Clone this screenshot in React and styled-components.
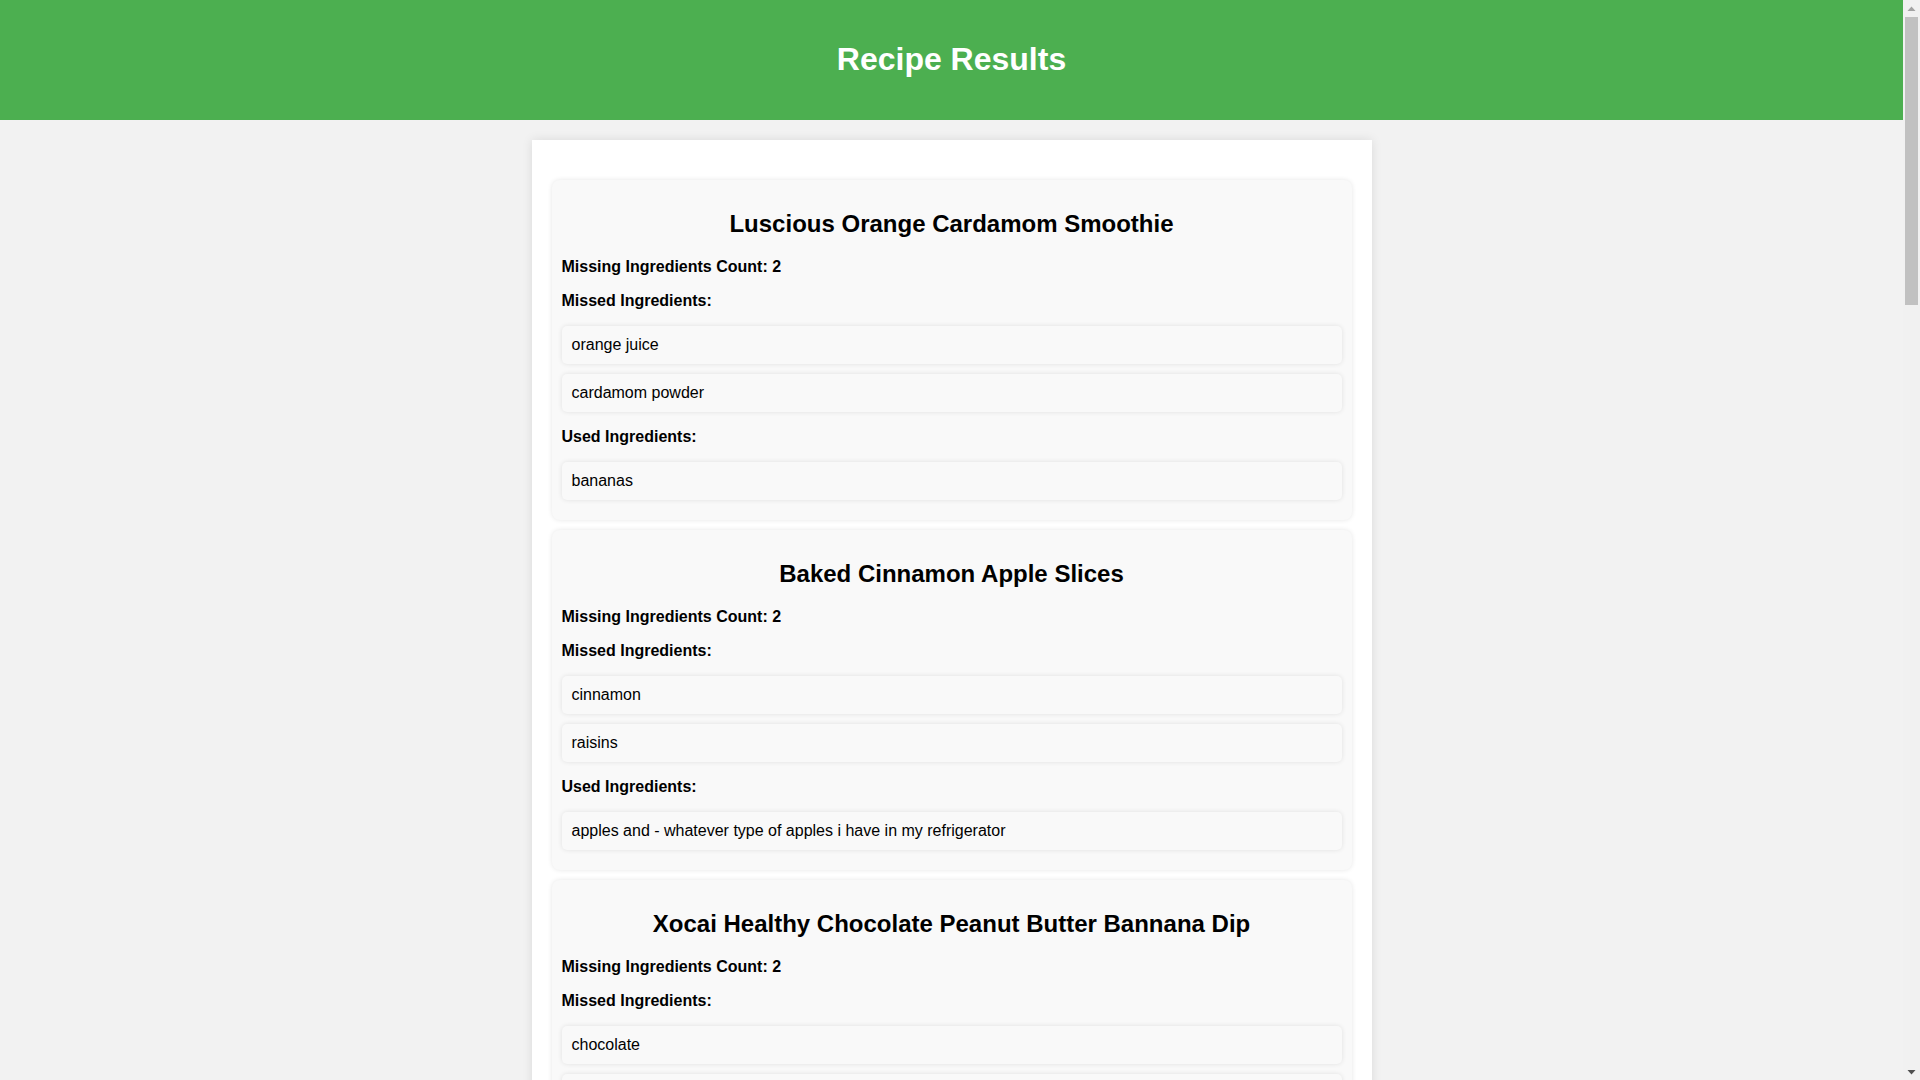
import React from "react";
import styled, { createGlobalStyle } from "styled-components";

const recipes = [
  {
    title: "Luscious Orange Cardamom Smoothie",
    missedCount: 2,
    missed: ["orange juice", "cardamom powder"],
    used: ["bananas"],
  },
  {
    title: "Baked Cinnamon Apple Slices",
    missedCount: 2,
    missed: ["cinnamon", "raisins"],
    used: ["apples and - whatever type of apples i have in my refrigerator"],
  },
  {
    title: "Xocai Healthy Chocolate Peanut Butter Bannana Dip",
    missedCount: 2,
    missed: ["chocolate", "peanut butter"],
    used: ["bananas"],
  },
  {
    title: "Banana Oatmeal Cookies",
    missedCount: 3,
    missed: ["rolled oats", "honey", "vanilla extract"],
    used: ["bananas"],
  },
  {
    title: "Cinnamon Sugar Fried Apples",
    missedCount: 3,
    missed: ["butter", "brown sugar", "cinnamon"],
    used: ["apples"],
  },
  {
    title: "Frozen Banana Bites",
    missedCount: 2,
    missed: ["dark chocolate", "coconut oil"],
    used: ["bananas"],
  },
  {
    title: "Apple Or Peach Strudel",
    missedCount: 3,
    missed: ["puff pastry", "sugar", "egg"],
    used: ["apples"],
  },
  {
    title: "Banana Bread Smoothie",
    missedCount: 2,
    missed: ["almond milk", "nutmeg"],
    used: ["bananas"],
  },
  {
    title: "Easy Homemade Applesauce",
    missedCount: 3,
    missed: ["lemon juice", "cinnamon", "water"],
    used: ["apples"],
  },
  {
    title: "Peanut Butter Banana Toast",
    missedCount: 2,
    missed: ["bread", "peanut butter"],
    used: ["bananas"],
  },
];

const GlobalStyle = createGlobalStyle`
  body {
    margin: 0 17px 0 0;
    padding: 0;
    font-family: "Liberation Sans", Arial, sans-serif;
    background-color: #f2f2f2;
    color: #000;
  }
`;

const App = () => {
  return (
    <>
      <GlobalStyle />
      <Header>
        <Title>Recipe Results</Title>
      </Header>
      <Container>
        {recipes.map((recipe) => (
          <RecipeCard key={recipe.title}>
            <RecipeTitle>{recipe.title}</RecipeTitle>
            <Label>Missing Ingredients Count: {recipe.missedCount}</Label>
            <Label>Missed Ingredients:</Label>
            <IngredientList>
              {recipe.missed.map((item) => (
                <Ingredient key={item}>{item}</Ingredient>
              ))}
            </IngredientList>
            <Label>Used Ingredients:</Label>
            <IngredientList>
              {recipe.used.map((item) => (
                <Ingredient key={item}>{item}</Ingredient>
              ))}
            </IngredientList>
          </RecipeCard>
        ))}
      </Container>
      <ScrollTrack>
        <ScrollButton>
          <svg width="9" height="6" viewBox="0 0 9 6">
            <polygon points="4.5,0.5 8.5,5 0.5,5" fill="#a3a3a3" />
          </svg>
        </ScrollButton>
        <ScrollThumb />
        <ScrollButton $bottom>
          <svg width="9" height="6" viewBox="0 0 9 6">
            <polygon points="0.5,1 8.5,1 4.5,5.5" fill="#505050" />
          </svg>
        </ScrollButton>
      </ScrollTrack>
    </>
  );
};

const Header = styled.header`
  background-color: #4caf50;
  color: white;
  text-align: center;
  padding: 20px;
`;
const Title = styled.h1`
  font-size: 32px;
  font-weight: bold;
  margin: 0.67em 0;
`;
const Container = styled.div`
  max-width: 800px;
  margin: 20px auto;
  padding: 40px 20px 20px;
  background: white;
  box-shadow: 0 0 10px rgba(0, 0, 0, 0.1);
`;
const RecipeCard = styled.div`
  background: #f9f9f9;
  border-radius: 8px;
  padding: 10px;
  margin-bottom: 10px;
  box-shadow: 0 0 5px rgba(0, 0, 0, 0.1);
`;
const RecipeTitle = styled.h2`
  font-size: 24px;
  font-weight: bold;
  text-align: center;
  margin: 20px 0;
`;
const Label = styled.p`
  font-size: 16px;
  font-weight: bold;
  margin: 16px 0;
`;
const IngredientList = styled.ul`
  list-style: none;
  padding: 0;
  margin: 16px 0 0;
`;
const Ingredient = styled.li`
  font-size: 16px;
  background: #f9f9f9;
  padding: 10px;
  margin-bottom: 10px;
  border-radius: 5px;
  box-shadow: 0 0 5px rgba(0, 0, 0, 0.1);
`;
const ScrollTrack = styled.div`
  position: fixed;
  top: 0;
  right: 0;
  width: 17px;
  height: 100vh;
  background: #f1f1f1;
  display: flex;
  flex-direction: column;
`;
const ScrollButton = styled.div`
  height: 17px;
  display: flex;
  align-items: center;
  justify-content: center;
  margin-top: ${(p) => (p.$bottom ? "auto" : "0")};
`;
const ScrollThumb = styled.div`
  height: 288px;
  margin: 0 2px;
  background: #c1c1c1;
`;

export default App;
